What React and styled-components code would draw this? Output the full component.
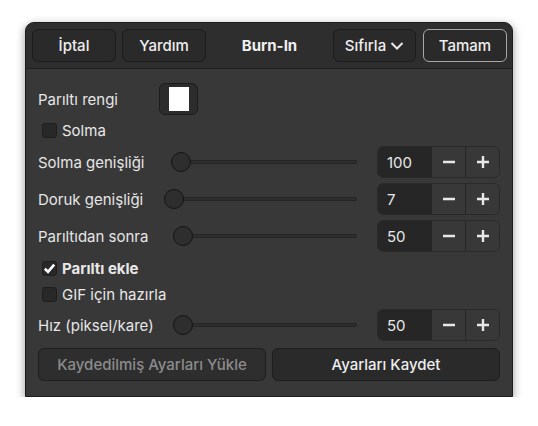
import React from 'react';
import styled, { createGlobalStyle } from 'styled-components';

const GlobalStyle = createGlobalStyle`
  body {
    margin: 0;
    background: #ffffff;
    font-family: Inter, "Noto Sans", sans-serif;
  }
`;

const settings = [
  { label: 'Solma genişliği', value: '100', pct: 0.035, mt: 6 },
  { label: 'Doruk genişliği', value: '7', pct: 0, mt: 5 },
  { label: 'Parıltıdan sonra', value: '50', pct: 0.046, mt: 5 },
];

function Minus() {
  return (
    <svg width="14" height="14" viewBox="0 0 14 14">
      <path d="M1 7h12" stroke="#e8e8e8" strokeWidth="2.4" />
    </svg>
  );
}

function Plus() {
  return (
    <svg width="14" height="14" viewBox="0 0 14 14">
      <path d="M1 7h12M7 1v12" stroke="#e8e8e8" strokeWidth="2.4" />
    </svg>
  );
}

function Check() {
  return (
    <svg width="13" height="13" viewBox="0 0 13 13">
      <path d="M1.8 6.8l3.2 3 6.2-7.2" fill="none" stroke="#ffffff" strokeWidth="2.6" />
    </svg>
  );
}

function Slider({ pct }) {
  return (
    <SliderWrap>
      <Track />
      <Knob style={{ left: `${pct * 100}%` }} />
    </SliderWrap>
  );
}

function Spinner({ value }) {
  return (
    <SpinBox>
      <SpinValue>{value}</SpinValue>
      <SpinButton><Minus /></SpinButton>
      <SpinButton><Plus /></SpinButton>
    </SpinBox>
  );
}

function CheckRow({ label, checked, mt }) {
  return (
    <CheckLine $mt={mt}>
      <Box>{checked && <Check />}</Box>
      <CheckLabel $bold={checked}>{label}</CheckLabel>
    </CheckLine>
  );
}

function App() {
  return (
    <>
      <GlobalStyle />
      <Page>
        <Window>
          <Header>
            <Group>
              <HeadButton>İptal</HeadButton>
              <HeadButton>Yardım</HeadButton>
            </Group>
            <Title>Burn-In</Title>
            <Group $end>
              <HeadButton $w={83}>
                Sıfırla
                <svg width="14" height="10" viewBox="0 0 14 10">
                  <path d="M1.5 2l5.5 5.5 5.5-5.5" fill="none" stroke="#e8e8e8" strokeWidth="2" />
                </svg>
              </HeadButton>
              <HeadButton $primary>Tamam</HeadButton>
            </Group>
          </Header>
          <Body>
            <Row>
              <Label $w={121}>Parıltı rengi</Label>
              <ColorButton>
                <Swatch />
              </ColorButton>
            </Row>
            <CheckRow label="Solma" mt={5} />
            {settings.map((s) => (
              <Row key={s.label} $mt={s.mt}>
                <Label $w={126}>{s.label}</Label>
                <Slider pct={s.pct} />
                <Spinner value={s.value} />
              </Row>
            ))}
            <CheckRow label="Parıltı ekle" checked mt={6} />
            <CheckRow label="GIF için hazırla" mt={6} />
            <Row $mt={5}>
              <Label $w={126}>Hız (piksel/kare)</Label>
              <Slider pct={0.046} />
              <Spinner value="50" />
            </Row>
            <Actions>
              <WideButton disabled>Kaydedilmiş Ayarları Yükle</WideButton>
              <WideButton>Ayarları Kaydet</WideButton>
            </Actions>
          </Body>
        </Window>
      </Page>
    </>
  );
}

export default App;

const Page = styled.div`
  padding: 22px 0 0 25px;
`;

const Window = styled.div`
  width: 488px;
  box-sizing: border-box;
  background: #383838;
  border: 1px solid #1c1c1c;
  border-radius: 9px 9px 0 0;
  box-shadow: 0 3px 9px 1px rgba(0, 0, 0, 0.33);
  overflow: hidden;
  color: #eeeeee;
  font-size: 15px;
`;

const Header = styled.div`
  display: grid;
  grid-template-columns: 1fr auto 1fr;
  align-items: center;
  padding: 6px 5px 6px 6px;
  background: #2e2e2e;
  border-bottom: 1px solid #1f1f1f;
`;

const Group = styled.div`
  display: flex;
  gap: ${(p) => (p.$end ? 7 : 6)}px;
  justify-content: ${(p) => (p.$end ? 'flex-end' : 'flex-start')};
`;

const Title = styled.div`
  font-weight: 700;
  font-size: 15px;
  color: #f0f0f0;
`;

const HeadButton = styled.button`
  width: ${(p) => p.$w || 84}px;
  height: 33px;
  display: flex;
  align-items: center;
  justify-content: center;
  gap: 4px;
  box-sizing: border-box;
  background: #2a2a2a;
  border: 1px solid ${(p) => (p.$primary ? '#a8a8a8' : '#1c1c1c')};
  border-radius: 6px;
  color: #eeeeee;
  font-family: inherit;
  font-size: 15px;
  font-weight: 500;
  padding: 0;
`;

const Body = styled.div`
  display: flex;
  flex-direction: column;
  padding: 14px 12px 15px 12px;
`;

const Row = styled.div`
  display: flex;
  align-items: center;
  height: 32px;
  margin-top: ${(p) => p.$mt || 0}px;
`;

const Label = styled.div`
  width: ${(p) => p.$w}px;
  flex: none;
  color: #e6e6e6;
  white-space: nowrap;
`;

const ColorButton = styled.div`
  width: 39px;
  height: 32px;
  box-sizing: border-box;
  display: flex;
  align-items: center;
  justify-content: center;
  background: #2c2c2c;
  border: 1px solid #1c1c1c;
  border-radius: 6px;
`;

const Swatch = styled.div`
  width: 20px;
  height: 24px;
  background: #ffffff;
`;

const CheckLine = styled.div`
  display: flex;
  align-items: center;
  gap: 5px;
  height: 20px;
  margin-top: ${(p) => p.$mt || 0}px;
  padding-left: 4px;
`;

const Box = styled.div`
  width: 15px;
  height: 15px;
  box-sizing: border-box;
  display: flex;
  align-items: center;
  justify-content: center;
  background: #282828;
  border: 1px solid #1e1e1e;
  border-radius: 3px;
`;

const CheckLabel = styled.span`
  font-weight: ${(p) => (p.$bold ? 700 : 400)};
  color: #e8e8e8;
`;

const SliderWrap = styled.div`
  position: relative;
  width: 193px;
  height: 22px;
  flex: none;
`;

const Track = styled.div`
  position: absolute;
  left: 10px;
  right: 0;
  top: 9px;
  height: 4px;
  box-sizing: border-box;
  background: #2e2e2e;
  border: 1px solid #252525;
  border-radius: 2px;
`;

const Knob = styled.div`
  position: absolute;
  top: 1px;
  width: 20px;
  height: 20px;
  box-sizing: border-box;
  background: #2e2e2e;
  border: 1px solid #141414;
  border-radius: 50%;
`;

const SpinBox = styled.div`
  display: flex;
  margin-left: auto;
  width: 123px;
  height: 32px;
  box-sizing: border-box;
  border: 1px solid #2a2a2a;
  border-radius: 6px;
  overflow: hidden;
`;

const SpinValue = styled.div`
  width: 53px;
  flex: none;
  display: flex;
  align-items: center;
  padding-left: 9px;
  box-sizing: border-box;
  background: #262626;
  color: #e8e8e8;
`;

const SpinButton = styled.div`
  flex: 1;
  display: flex;
  align-items: center;
  justify-content: center;
  border-left: 1px solid #262626;
  background: #383838;
`;

const Actions = styled.div`
  display: grid;
  grid-template-columns: 228px 1fr;
  gap: 6px;
  margin-top: 7px;
`;

const WideButton = styled.button`
  height: 33px;
  box-sizing: border-box;
  background: ${(p) => (p.disabled ? '#2e2e2e' : '#2a2a2a')};
  border: 1px solid #1e1e1e;
  border-radius: 6px;
  color: ${(p) => (p.disabled ? '#8c8c8c' : '#eeeeee')};
  font-family: inherit;
  font-size: 15px;
  font-weight: 500;
`;
